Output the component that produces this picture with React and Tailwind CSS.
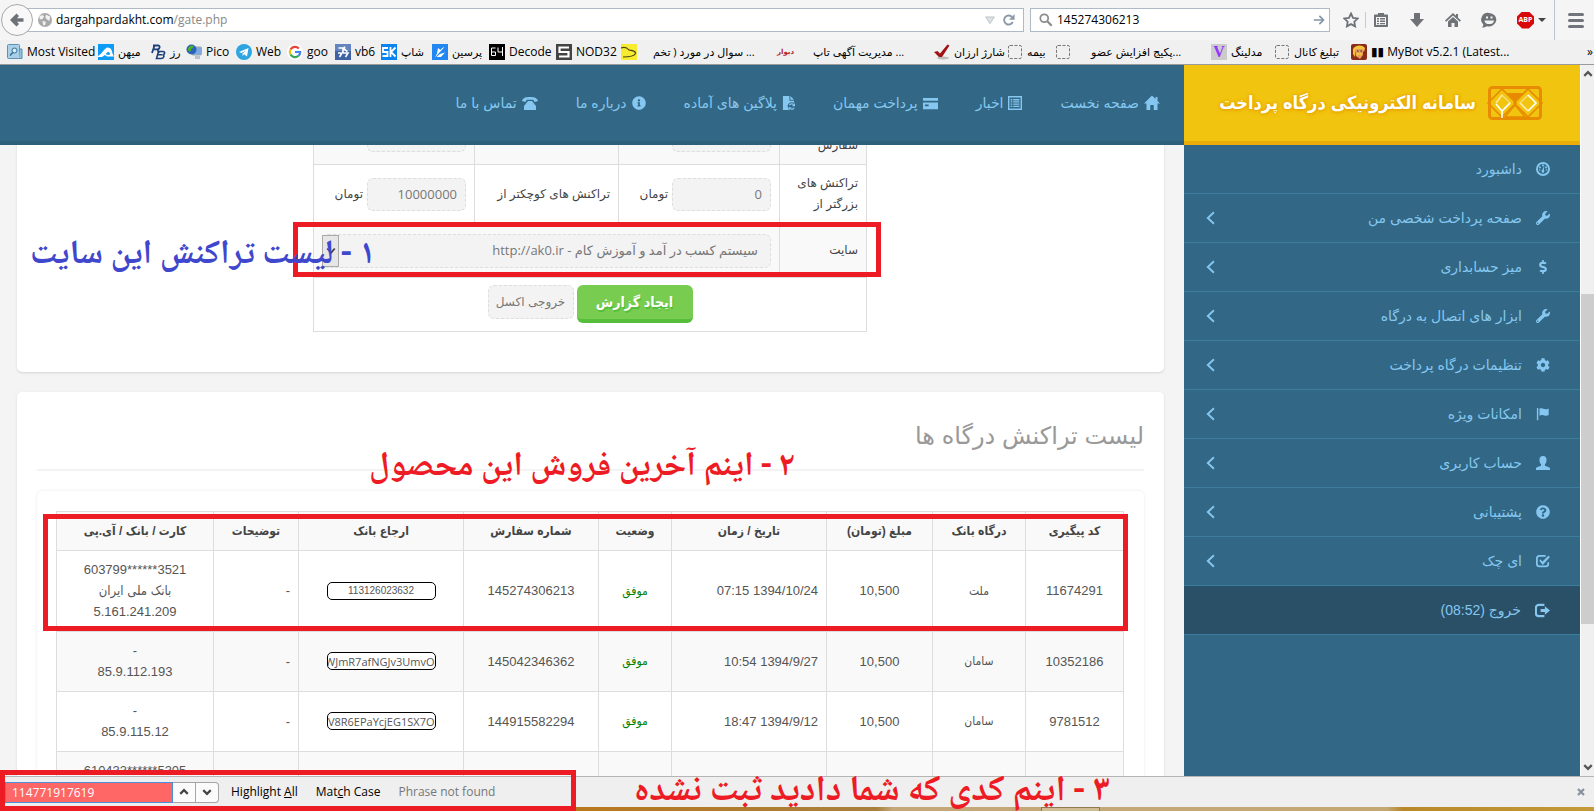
import React from "react";
import { FaWrench, FaDollarSign, FaQuestionCircle, FaCog, FaInfoCircle } from "react-icons/fa";

const FA = "font-['Liberation_Sans','DejaVu_Sans',sans-serif]";
const FA_NARROW = "font-['Liberation_Sans','DejaVu_Sans_Condensed',sans-serif]";
const UI = "font-['Open_Sans','DejaVu_Sans',sans-serif]";
const NOTE = "font-['Noto_Naskh_Arabic','DejaVu_Sans_Condensed','DejaVu_Sans',serif] font-bold whitespace-nowrap pointer-events-none absolute";

const Svg = ({ vb = "0 0 16 16", className = "size-4", children }) => (
  <svg viewBox={vb} className={`shrink-0 ${className}`} fill="currentColor" aria-hidden="true">{children}</svg>
);

/* ---------- bookmark icons ---------- */
const Tile = ({ bg, children }) => (
  <Svg><rect width="16" height="16" fill={bg} />{children}</Svg>
);
const Dashed = () => (
  <Svg><rect x="1.5" y="1.5" width="13" height="13" rx="1.5" fill="none" stroke="#777" strokeDasharray="3 1.5" /></Svg>
);
const icons = {
  most: <Svg><rect x=".5" y=".5" width="12" height="14" rx="1" fill="#a9d0e6" stroke="#5b93b5" /><path d="M13 5h2v9.500h-3" fill="#8fc0dc" stroke="#5b93b5" /><circle cx="7.500" cy="6.500" r="2.500" fill="#d8ecf6" stroke="#2f6f96" /><path d="M5.800 8.500 3 11.500" stroke="#2f6f96" strokeWidth="1.500" /></Svg>,
  mihan: <Tile bg="#0d9cf5"><path d="M0 12C4 10 6 5 9 3.500 12.500 3 14 6 14.500 9.500L16 12.500H9L7 11l-3 2H0Z" fill="#fff" /><path d="M8 10.500c0-3 3.500-3.500 4-1l-.5 1.500Z" fill="#0d9cf5" /></Tile>,
  rb: <Svg><path d="M3 1.500h5c2.500 0 2 3.500-.5 3.800L9 9M4.500 1.500 2 9M3.500 5.300h4" fill="none" stroke="#1f3f7a" strokeWidth="1.800" /><path d="M8.500 7.500h4.500c2.500 0 2 3-.5 3.300 2.500.3 1.500 3.700-1.500 3.700H6.500l2-7Zm-1 3.300H12" fill="none" stroke="#1f3f7a" strokeWidth="1.600" /></Svg>,
  pico: <Svg><rect x="6" y="3" width="9.500" height="8" rx="1" fill="#7fa9e0" stroke="#9aa" /><rect x="9" y="12" width="5" height="3" fill="#b9c4d0" /><circle cx="5.500" cy="5.500" r="5" fill="#2b63b8" /><path d="M2 4c2-3 4-3 6-2 0 2-3 2-3 4s-2 2-3 0Z" fill="#4caf2f" /></Svg>,
  web: <Svg><circle cx="8" cy="8" r="8" fill="#2ca5e0" /><path d="M3 8 12.500 4 11 12.500 8 10.300 6.500 12V9.500L10 6.500 5.500 9Z" fill="#fff" /></Svg>,
  goo: <Svg><circle cx="8" cy="8" r="8" fill="#fff" /><g fill="none" strokeWidth="2.200"><path d="M11.800 4.500A5.200 5.200 0 0 0 3.500 5.500" stroke="#ea4335" /><path d="M3.500 5.500a5.200 5.200 0 0 0 0 5" stroke="#fbbc05" /><path d="M3.500 10.500a5.200 5.200 0 0 0 8 1.300" stroke="#34a853" /><path d="M8 8h5.200a5.200 5.200 0 0 1-1.700 3.800" stroke="#4285f4" /></g></Svg>,
  vb6: <Tile bg="#3f62a3"><path d="M0 0h16v7H0z" fill="#7c9bd2" opacity=".6" /><path d="M3.500 4h4.500v3.500L4.500 13M9.500 2.500v3l3 2M8 9h5l-2.500 4M3 9h3" fill="none" stroke="#fff" strokeWidth="1.600" /></Tile>,
  sk: <Tile bg="#0a84ee"><path d="M7 4H2v4h4.500v4H1.500M9.500 3v10M14.500 3.500 10 8l4.500 4.500" fill="none" stroke="#fff" strokeWidth="1.800" /></Tile>,
  per: <Tile bg="#2387f2"><path d="M3 13.500 12.500 3C10.500 3.500 9.500 4.500 8.500 6L6 4 5 9.500ZM8 10l5-1.500-4 4.500H4.500Z" fill="#fff" /></Tile>,
  n64: <Tile bg="#000"><path d="M6.500 4H2.500v7.500h4V8h-4M9 3.500V8h4.500M13.500 3v9" fill="none" stroke="#fff" strokeWidth="1" /></Tile>,
  s: <Tile bg="#434343"><path d="M13 3.500H3.500V8h9v4.500H3" fill="none" stroke="#fff" strokeWidth="2.200" /></Tile>,
  yel: <Tile bg="#f8ec32"><path d="M0 4c4-1.500 6-.5 8 2 3 .5 7 1 6.500 3.500C13 12.500 7 13 2 13" fill="none" stroke="#4b4616" strokeWidth="1.200" /></Tile>,
  divar: <span className="w-4 shrink-0 text-center text-[7px] font-bold leading-4 text-[#b01c2c]">دیوار</span>,
  check: <Svg><ellipse cx="9" cy="14" rx="6" ry="1.500" fill="#bbb" /><path d="M0 8 3.500 7 6 9.500 13.500.5 15.500 1.500 8 13H5Z" fill="#a01216" /></Svg>,
  dash: <Dashed />,
  v: <span className="size-4 shrink-0 bg-[#cbcbcb] text-center font-['Liberation_Serif',serif] text-base font-bold leading-4 text-[#9333ff]">V</span>,
  bot: <Svg><rect width="16" height="16" rx="2" fill="#8c2b17" /><path d="M2 5C4 1 11 0 14 4l-1 4-2-3H5L4 13 2 10Z" fill="#f2c53a" /><path d="M5 5h7v6l-3 4-4-3Z" fill="#e59a62" /><path d="M5 9h6l-1 3-2-1.500L6 13Z" fill="#f2c53a" /><path d="M6 7h1.500M9.500 7H11" stroke="#40200f" /></Svg>,
};

const bookmarks = [
  ["most", "Most Visited", "w-[91px]"],
  ["mihan", "میهن", "w-[52px]"],
  ["rb", "رز", "w-[36px]"],
  ["pico", "Pico", "w-[50px]"],
  ["web", "Web", "w-[51px]"],
  ["goo", "goo", "w-[48px]"],
  ["vb6", "vb6", "w-[46px]"],
  ["sk", "شاپ", "w-[51px]"],
  ["per", "پرسین", "w-[57px]"],
  ["n64", "Decode", "w-[67px]"],
  ["s", "NOD32", "w-[65px]"],
  ["yel", "سوال در مورد ( تخم ...", "w-[156px]", "pl-3"],
  ["divar", "مدیریت آگهی تاپ ...", "w-[157px]", "pl-4"],
  ["check", "شارژ ارزان", "w-[73px]"],
  ["dash", "بیمه", "w-[48px]"],
  ["dash", "پکیج افزایش عضو...", "w-[156px]", "pl-4"],
  ["v", "مدلینگ", "w-[63px]"],
  ["dash", "تبلیغ کانال", "w-[77px]"],
  ["bot", "▮▮ MyBot v5.2.1 (Latest...", "w-[160px]"],
];

function Browser() {
  return (
    <header className={`${UI} shrink-0 border-b border-[#9a9a9a] bg-[#f0f0f0] text-xs text-black`}>
      <div className="flex h-10 items-center bg-[#f5f5f5]">
        <button aria-label="Back" className="relative z-10 ml-px flex size-8 shrink-0 items-center justify-center rounded-full border border-[#a8a8a8] bg-[#f8f8f8] text-[#6d7278]">
          <Svg className="size-4"><path d="M7.500 1.500 10 4 8 6.300h6.500v3.400H8L10 12l-2.500 2.500L1 8Z" /></Svg>
        </button>
        <div className="-ml-2 flex h-6 min-w-0 flex-1 items-center border border-[#aebac6] bg-white pl-3 pr-1">
          <Svg className="mr-1 size-[14px]"><circle cx="8" cy="8" r="8" fill="#a9a9a9" /><path d="M1.500 4C4 2 6 2.500 7 4l-2 3H2ZM9 2l5 2-1 5-3-2-1.500-2ZM5 9l4 1-1 4H6Z" fill="#f2f2f2" /></Svg>
          <input aria-label="Address" className="sr-only" defaultValue="dargahpardakht.com/gate.php" />
          <span aria-hidden="true" className="flex-1">dargahpardakht.com<span className="text-[#888]">/gate.php</span></span>
          <Svg className="mr-2 size-[10px]"><path d="M1 3h14L8 14Z" fill="#dde1e6" stroke="#a9afb6" /></Svg>
          <button aria-label="Reload" className="mr-1 text-[#8d99a6]"><Svg className="size-3"><path d="M13 10.500A6 6 0 1 1 12 4" fill="none" stroke="currentColor" strokeWidth="2.600" /><path d="M15.500 0v7.500H8Z" /></Svg></button>
        </div>
        <div className="ml-[6px] flex h-6 w-[300px] shrink-0 items-center border border-[#aebac6] bg-white px-1">
          <Svg className="mx-1 size-[14px] text-[#8d8d8d]"><circle cx="6" cy="6" r="4.500" fill="none" stroke="currentColor" strokeWidth="2" /><path d="m9.500 9.500 5 5" stroke="currentColor" strokeWidth="2.600" /></Svg>
          <input aria-label="Search" className="min-w-0 flex-1 bg-transparent outline-none" defaultValue="145274306213" />
          <button aria-label="Go" className="text-[#8294a5]"><Svg className="size-3"><path d="M1 8h13M8.500 2.500 14 8l-5.500 5.500" fill="none" stroke="currentColor" strokeWidth="2.200" /></Svg></button>
        </div>
        <div className="flex h-full w-[264px] shrink-0 items-center text-[#6f7378]">
          <button aria-label="Bookmark" className="ml-[13px]"><Svg className="size-4"><path d="m8 1.500 2 4.300 4.700.6-3.400 3.300.8 4.700L8 12.100l-4.100 2.300.8-4.700L1.300 6.400 6 5.800Z" fill="none" stroke="currentColor" strokeWidth="1.800" /></Svg></button>
          <span className="ml-[6px] h-4 w-px bg-[#c9c9c9]" />
          <button aria-label="Bookmarks list" className="ml-[7px]"><Svg className="size-4"><path d="M5 2.500V1h6v1.500h3c.6 0 1 .4 1 1V14c0 .6-.4 1-1 1H2c-.6 0-1-.4-1-1V3.500c0-.6.4-1 1-1ZM3 5v8h10V5Z" fillRule="evenodd" /><path d="M4 6h2v1.500H4zm3 0h5v1.500H7zM4 8.500h2V10H4zm3 0h5V10H7zM4 11h2v1.200H4zm3 0h5v1.200H7z" /></Svg></button>
          <button aria-label="Downloads" className="ml-5"><Svg className="size-4"><path d="M5 1h6v6h4l-7 8-7-8h4Z" /></Svg></button>
          <button aria-label="Home" className="ml-5"><Svg className="size-4"><path d="M8 1 0 8.500l1.200 1.200L8 3.500l6.800 6.200L16 8.500 13 5.700V2h-2v1.800Z" /><path d="m8 5-5 4.500V15h3.500v-4h3v4H13V9.500Z" /></Svg></button>
          <button aria-label="Chat" className="ml-5"><Svg className="size-4"><path d="M8 1a7.500 6.700 0 1 1-2 13.200C4.500 15 3 15.500 1 15.500c1-1 1.400-2 1.300-3A6.700 6.700 0 0 1 8 1Z" /><path d="M5 4.500h2v2H5zm4.500 0h2v2h-2zM3.500 8.500h9.500c-.5 3-2.500 3.500-4.700 3.500S4 11.500 3.500 8.500Z" fill="#f5f5f5" /></Svg></button>
          <button aria-label="ABP" className="ml-5 flex items-center"><span className="flex size-[17px] items-center justify-center bg-[#d8090a] text-[7px] font-bold text-white [clip-path:polygon(30%_0,70%_0,100%_30%,100%_70%,70%_100%,30%_100%,0_70%,0_30%)]">ABP</span><span className="ml-1 border-x-4 border-t-4 border-x-transparent border-t-[#444]" /></button>
          <span className="ml-2 h-full w-px bg-[#bcc6d2]" />
          <button aria-label="Menu" className="ml-[13px] flex w-4 flex-col gap-[3px]"><i className="h-[3px] rounded bg-[#70757b]" /><i className="h-[3px] rounded bg-[#70757b]" /><i className="h-[3px] rounded bg-[#70757b]" /></button>
        </div>
      </div>
      <nav className="flex h-6 items-center overflow-hidden pl-[7px]">
        {bookmarks.map(([ic, label, w, pad = ""], i) => (
          <a href="#" key={i} className={`flex shrink-0 items-center gap-1 whitespace-nowrap ${w}`}>
            {icons[ic]}
            <span className={`${pad} ${/[؀-ۿ]/.test(label) ? "text-[11px]" : ""}`}>{label}</span>
          </a>
        ))}
        <span className="ml-auto pr-px">»</span>
      </nav>
    </header>
  );
}

/* ---------- site header ---------- */
const nav = [
  [<Svg className="size-4"><path d="M8 .5 0 8.500h2.500V15H6.300v-5h3.400v5h3.800V8.500H16l-2.500-2.600V2h-2v1.900Z" /></Svg>, "صفحه نخست"],
  [<Svg className="size-[14px]"><path d="M0 0h16v16H0Zm1.600 1.600v12.800h12.800V1.600Z" fillRule="evenodd" /><path d="M3 3.500h2v1.500H3zm3 0h7v1.500H6zM3 6h2v1.500H3zm3 0h7v1.500H6zM3 8.500h2V10H3zm3 0h7V10H6zM3 11h2v1.500H3zm3 0h7v1.500H6z" /></Svg>, "اخبار"],
  [<Svg className="size-[15px]"><path d="M0 2h16v3H0zM0 7h16v7H0Zm2 2v2h4V9Z" fillRule="evenodd" /></Svg>, "پرداخت مهمان"],
  [<Svg vb="0 0 14 16" className="h-[15px] w-[13px]"><path d="M1 0h7v5h5v2.500C11 6 7 6.500 6 10.500L7 15H1ZM9 0l4 4H9Z" /><path d="M8 9.800a3 3 0 0 1 4.500-.8M13 12.500a3 3 0 0 1-4.500 1" fill="none" stroke="currentColor" strokeWidth="1.300" /><path d="M14 7.500V11h-3.500zM7 15.500V12h3.500z" /></Svg>, "پلاگین های آماده"],
  [<FaInfoCircle className="size-[14px]" />, "درباره ما"],
  [<Svg className="size-4"><path d="M0 6C1 2.500 4 2 8 2s7 .5 8 4l-3.500 1-1.200-2.300H4.700L3.500 7Z" /><path d="M6 6h4l4 5v4H2v-4Z" /></Svg>, "تماس با ما"],
];

const Logo = () => (
  <svg viewBox="0 0 58 36" className="h-9 w-[58px] shrink-0" fill="none" aria-hidden="true">
    <rect x="3.500" y="2.500" width="51" height="31" rx="3" stroke="#e88b00" strokeWidth="3" />
    <path d="M20 8h18l-9 9Z" fill="#e88b00" />
    <path d="M16 4 2 18l14 14 14-14ZM42 4 28 18l14 14 14-14Z" stroke="#e88b00" strokeWidth="1.600" />
    <path d="m29 20 10 12H19Z" stroke="#e88b00" strokeWidth="1.400" />
    <path d="m16 10 8 8-8 8M42 26l-8-8 8-8" stroke="#f9dc7a" strokeWidth="1.300" />
    <path d="m10 19 6 7 8-8M16 26v7M42 10l8 8-8 8" stroke="#fff" strokeWidth="1.600" />
    <path d="m10 18 6-8M42 26l-8-8" stroke="#ffe9a0" strokeWidth="1.600" />
  </svg>
);

/* ---------- sidebar ---------- */
const menu = [
  [<Svg className="size-[14px]"><circle cx="8" cy="8" r="6.900" fill="none" stroke="currentColor" strokeWidth="2.200" /><path d="M7 2.800h2v2H7zM3.600 5h2v2h-2zM10.500 5h2v2h-2zM3.500 8.200h1.500v1.500H3.500zM11.200 8.200h1.500v1.500h-1.500zM9.500 4 9 9.500a1.600 1.600 0 1 1-1.800-.3Z" /></Svg>, "داشبورد", false],
  [<FaWrench className="size-[14px]" />, "صفحه پرداخت شخصی من", true],
  [<FaDollarSign className="size-[14px]" />, "میز حسابداری", true],
  [<FaWrench className="size-[14px]" />, "ابزار های اتصال به درگاه", true],
  [<FaCog className="size-[14px]" />, "تنظیمات درگاه پرداخت", true],
  [<Svg className="size-[14px]"><path d="M1 1h1.600v14H1zM4 2c3-1.500 5 1 7.500.5 1.500 0 2-.5 3-.8v7.500c-3 1.800-5 .3-7 0-1.500-.2-2.500.3-3.500.8Z" /></Svg>, "امکانات ویژه", true],
  [<Svg className="size-[14px]"><path d="M8 0c3 0 4.300 2 4 5-.2 2.500-1 3.500-1.800 4.500v1.500C12 12 16 12.500 16 14v2H0v-2c0-1.500 4-2 5.800-3V9.500C5 8.500 4.200 7.500 4 5c-.3-3 1-5 4-5Z" /></Svg>, "حساب کاربری", true],
  [<FaQuestionCircle className="size-[14px]" />, "پشتیبانی", true],
  [<Svg className="size-[14px]"><path d="M11 2H4a3 3 0 0 0-3 3v6a3 3 0 0 0 3 3h7a3 3 0 0 0 3-3V9.500" fill="none" stroke="currentColor" strokeWidth="2" /><path d="m4.500 6 3 2.500L14 2l2 1.500-8.300 9L4 8Z" /></Svg>, "ای چک", true],
  [<Svg className="size-[15px]"><path d="M10 2H4a3 3 0 0 0-3 3v6a3 3 0 0 0 3 3h6" fill="none" stroke="currentColor" strokeWidth="2.200" /><path d="M6 6.500h4.500V3.500L16 8l-5.500 4.500V9.500H6Z" /></Svg>, "خروج (08:52)", false],
];

const dashInput = "rounded-md border border-dashed border-[#ddd] bg-[#f3f3f3] text-[#777]";
const fCell = "border border-[#ddd] px-2 py-2";

function AmountField({ label, name, id, value, unit }) {
  return (
    <>
      <td className={fCell}>{label && <label htmlFor={id} className="whitespace-pre-line">{label}</label>}</td>
      <td className={fCell}>
        <div className="flex items-center gap-1">
          <input id={id} aria-label={name} dir="ltr" defaultValue={value} className={`${dashInput} h-[33px] w-[99px] px-2 text-right font-['Open_Sans',sans-serif] text-[13px]`} />
          {unit && <span>{unit}</span>}
        </div>
      </td>
    </>
  );
}

function ReportForm() {
  return (
    <section className="-mt-[60px] shrink-0 rounded-[5px] bg-white pb-10 pt-5 shadow-sm">
      <div className="relative mx-auto w-[553px]">
        <table className="w-full table-fixed border-collapse text-right text-xs leading-[21px] text-[#444]">
          <colgroup><col className="w-[87px]" /><col className="w-[161px]" /><col className="w-[144px]" /><col className="w-[161px]" /></colgroup>
          <tbody>
            <tr className="h-[59px] bg-[#f9f9f9]"><AmountField label={"\nسفارش"} id="order" value="" /><AmountField name="کد پیگیری" id="track" value="" /></tr>
            <tr className="h-[59px]"><AmountField label="تراکنش های بزرگتر از" id="min" value="0" unit="تومان" /><AmountField label="تراکنش های کوچکتر از" id="max" value="10000000" unit="تومان" /></tr>
            <tr className="h-[54px] bg-[#f9f9f9]">
              <td className={fCell}><label htmlFor="site">سایت</label></td>
              <td colSpan="3" className={fCell}>
                <div className="relative">
                  <select id="site" className={`${dashInput} ${UI} h-[34px] w-full appearance-none px-3 text-[13px]`}>
                    <option>سیستم کسب در آمد و آموزش کام - http://ak0.ir</option>
                  </select>
                  <span className="pointer-events-none absolute left-0 top-px flex h-8 w-[17px] items-center justify-center border border-[#aaa] bg-[#e6e6e6] text-[#444]">
                    <Svg className="size-[10px]"><path d="m2 4 6 7 6-7" fill="none" stroke="currentColor" strokeWidth="3" /></Svg>
                  </span>
                </div>
              </td>
            </tr>
            <tr>
              <td colSpan="4" className="border border-[#ddd] px-2 pb-2 pt-[7px]">
                <div className="flex items-start justify-center gap-[3px]">
                  <button className={`${FA_NARROW} h-[38px] w-[116px] rounded-md border-b-4 border-[#55bf3b] bg-[#78cd51] text-sm font-bold text-white [text-shadow:1px_2px_0_#55bf3b]`}>ایجاد گزارش</button>
                  <button className={`${dashInput} h-[34px] w-[86px]`}>خروجی اکسل</button>
                </div>
              </td>
            </tr>
          </tbody>
        </table>
        <div className="pointer-events-none absolute -left-[21px] -right-[14px] top-[117px] h-[55px] border-[5px] border-[#ed1c24]" />
        <div className={`${NOTE} -left-[284px] top-[127px] text-[34px] leading-[48px] text-[#3f48cc]`}>۱ - لیست تراکنش این سایت</div>
      </div>
    </section>
  );
}

const heads = ["کد پیگیری", "درگاه بانک", "مبلغ (تومان)", "تاریخ / زمان", "وضعیت", "شماره سفارش", "ارجاع بانک", "توضیحات", "کارت / بانک / آی.پی"];
const rows = [
  ["11674291", "ملت", "07:15 1394/10/24", "145274306213", "113126023632", ["603799******3521", "بانک ملی ایران", "5.161.241.209"]],
  ["10352186", "سامان", "10:54 1394/9/27", "145042346362", "WJmR7afNGJv3UmvO", ["-", "85.9.112.193"]],
  ["9781512", "سامان", "18:47 1394/9/12", "144915582294", "NV8R6EPaYcjEG1SX7O", ["-", "85.9.115.12"]],
  ["", "", "", "", "", ["610433******5305", "", ""]],
];
const tCell = "border border-[#ddd] px-2 pt-2 pb-[9px]";

function Transactions() {
  return (
    <section className="relative mt-5 shrink-0 rounded-[5px] bg-white px-5 pb-5 shadow-sm">
      <h2 className="border-b-2 border-[#f3f3f3] pb-[15px] pt-[25px] text-2xl leading-[37px] text-[#999]">لیست تراکنش درگاه ها</h2>
      <div className="mt-5 rounded-[5px] p-5 shadow-[0_0_3px_rgba(0,0,0,0.1)]">
        <div className="relative">
          <table className={`${FA_NARROW} w-full table-fixed border-collapse text-center text-[13px] leading-[21px] text-[#555]`}>
            <colgroup>
              <col className="w-[98px]" /><col className="w-[93px]" /><col className="w-[106px]" /><col className="w-[155px]" /><col className="w-[73px]" /><col className="w-[135px]" /><col className="w-[165px]" /><col className="w-[85px]" /><col className="w-[157px]" />
            </colgroup>
            <thead><tr className="h-[39px] bg-[#f9f9f9]">{heads.map((h) => <th key={h} className="whitespace-nowrap border border-[#ddd] text-xs font-bold text-[#444]">{h}</th>)}</tr></thead>
            <tbody>
              {rows.map((r, i) => (
                <tr key={i} className={i % 2 ? "bg-[#f9f9f9]" : ""}>
                  <td className={tCell}>{r[0]}</td>
                  <td className={`${tCell} text-xs`}>{r[1]}</td>
                  <td className={tCell}>{r[0] && "10,500"}</td>
                  <td className={`${tCell} text-right`}><span dir="ltr">{r[2]}</span></td>
                  <td className={`${tCell} text-xs text-[#008000]`}>{r[0] && "موفق"}</td>
                  <td className={tCell}>{r[3]}</td>
                  <td className={tCell}>
                    {r[4] && <input readOnly aria-label="ارجاع بانک" value={r[4]} className={`mx-auto block h-[18px] w-[109px] rounded-[5px] border border-black bg-white text-center ${i ? "font-['Open_Sans',sans-serif] text-[11px]" : "text-[10px]"}`} />}
                  </td>
                  <td className={`${tCell} text-right`}>{r[0] && "-"}</td>
                  <td className={tCell}>{r[5].map((t, k) => <div key={k} dir="auto" className="h-[21px]">{t}</div>)}</td>
                </tr>
              ))}
            </tbody>
          </table>
          <div className="pointer-events-none absolute -left-[14px] -right-1 top-[3px] h-[117px] border-[5px] border-[#ed1c24]" />
        </div>
      </div>
      <div className={`${NOTE} left-[352px] top-[52px] text-[34px] leading-[48px] text-[#ed1c24]`}>۲ - اینم آخرین فروش این محصول</div>
    </section>
  );
}

function FindBar() {
  return (
    <footer dir="ltr" className={`${UI} relative shrink-0 text-xs`}>
      <div className="flex h-[31px] items-center border-t border-[#b5b5b5] bg-[#efefef] pl-[5px] pr-[9px]">
        <input aria-label="Find" defaultValue="114771917619" className="h-[21px] w-[168px] border border-[#4a90d9] bg-[#ff6666] px-[6px] text-white" />
        <button aria-label="Previous" className="flex h-[21px] w-[23px] items-center justify-center border-y border-r border-[#a5a5a5] bg-[#fbfbfb] text-[#444]"><Svg className="size-[10px]"><path d="m2 11 6-6 6 6" fill="none" stroke="currentColor" strokeWidth="3.500" /></Svg></button>
        <button aria-label="Next" className="flex h-[21px] w-[23px] items-center justify-center rounded-r-sm border-y border-r border-[#a5a5a5] bg-[#fbfbfb] text-[#444]"><Svg className="size-[10px]"><path d="m2 5 6 6 6-6" fill="none" stroke="currentColor" strokeWidth="3.500" /></Svg></button>
        <button className="ml-3">Highlight <u>A</u>ll</button>
        <button className="ml-[18px]">Mat<u>c</u>h Case</button>
        <span className="ml-[18px] text-[#777]">Phrase not found</span>
        <button aria-label="Close" className="ml-auto text-[#8792a0]"><Svg className="size-2"><path d="m2 2 12 12M14 2 2 14" stroke="currentColor" strokeWidth="4.500" /></Svg></button>
      </div>
      <div className="flex h-1 bg-[linear-gradient(90deg,#b9781e_0%,#b9781e_36%,#a8803c_55%,#c4a87a_56%,#c4a873_87%,#b9882a_88%,#c49a3a_100%)]">
        <span className="ml-[1041px] w-[59px] border border-b-0 border-[#8f7a50] bg-[#d0bc94]" />
      </div>
      <div className="pointer-events-none absolute -top-[6px] bottom-0 left-0 w-[576px] border-[5px] border-[#ed1c24]" />
      <div dir="rtl" className={`${NOTE} -top-[3px] left-[634px] text-4xl leading-[40px] text-[#ed1c24]`}>۳ - اینم کدی که شما دادید ثبت نشده</div>
    </footer>
  );
}

export default function App() {
  return (
    <div className="flex h-screen flex-col overflow-hidden bg-[#f4f4f4]">
      <Browser />
      <div className="flex min-h-0 flex-1">
        <div dir="rtl" className={`${FA} flex min-h-0 min-w-0 flex-1`}>
          <aside className="flex w-[396px] shrink-0 flex-col bg-[#326785]">
            <div className="flex h-20 shrink-0 items-center gap-[10px] border-b-4 border-[#ecac07] bg-[#f1c40f] pr-9">
              <Logo />
              <h1 className={`${FA_NARROW} whitespace-nowrap text-lg font-bold text-white [text-shadow:0_0_3px_#e8a500,0_0_3px_#e8a500,0_1px_4px_#e8a500]`}>سامانه الکترونیکی درگاه پرداخت</h1>
            </div>
            <ul className="text-sm text-[#85c7f0]">
              {menu.map(([ic, label, sub], i) => (
                <li key={label} className={`h-[49px] border-b border-[#3c7c9c] ${i === 9 ? "bg-[#2a5067]" : ""}`}>
                  <a href="#" className="flex h-full items-center pl-[19px] pr-[30px]">
                    {ic}<span className="mr-[14px]">{label}</span>
                    {sub && <Svg className="mr-auto size-[14px]"><path d="M12.500 1.500 5.500 8l7 6.500" fill="none" stroke="currentColor" strokeWidth="2.200" /></Svg>}
                  </a>
                </li>
              ))}
            </ul>
          </aside>
          <div className="flex min-w-0 flex-1 flex-col">
            <nav className="relative z-10 flex h-20 shrink-0 items-center gap-[38px] border-b-4 border-[#2d5f7b] bg-[#326785] pr-6 text-sm text-[#85c7f0]">
              {nav.map(([ic, label]) => <a href="#" key={label} className="flex items-center gap-[5px] whitespace-nowrap">{ic}<span>{label}</span></a>)}
            </nav>
            <main className="flex min-h-0 flex-1 flex-col overflow-hidden pl-[17px] pr-5">
              <ReportForm />
              <Transactions />
            </main>
          </div>
        </div>
        <div className="flex w-[14px] shrink-0 flex-col items-center border-l border-white bg-[#f0f0f0] text-[#555]">
          <Svg className="my-1 size-[10px]"><path d="m2 11 6-6 6 6" fill="none" stroke="currentColor" strokeWidth="3.500" /></Svg>
          <div className="mt-[211px] h-[330px] w-full bg-[#cdcdcd]" />
          <Svg className="mb-1 mt-auto size-[10px]"><path d="m2 5 6 6 6-6" fill="none" stroke="currentColor" strokeWidth="3.500" /></Svg>
        </div>
      </div>
      <FindBar />
    </div>
  );
}
